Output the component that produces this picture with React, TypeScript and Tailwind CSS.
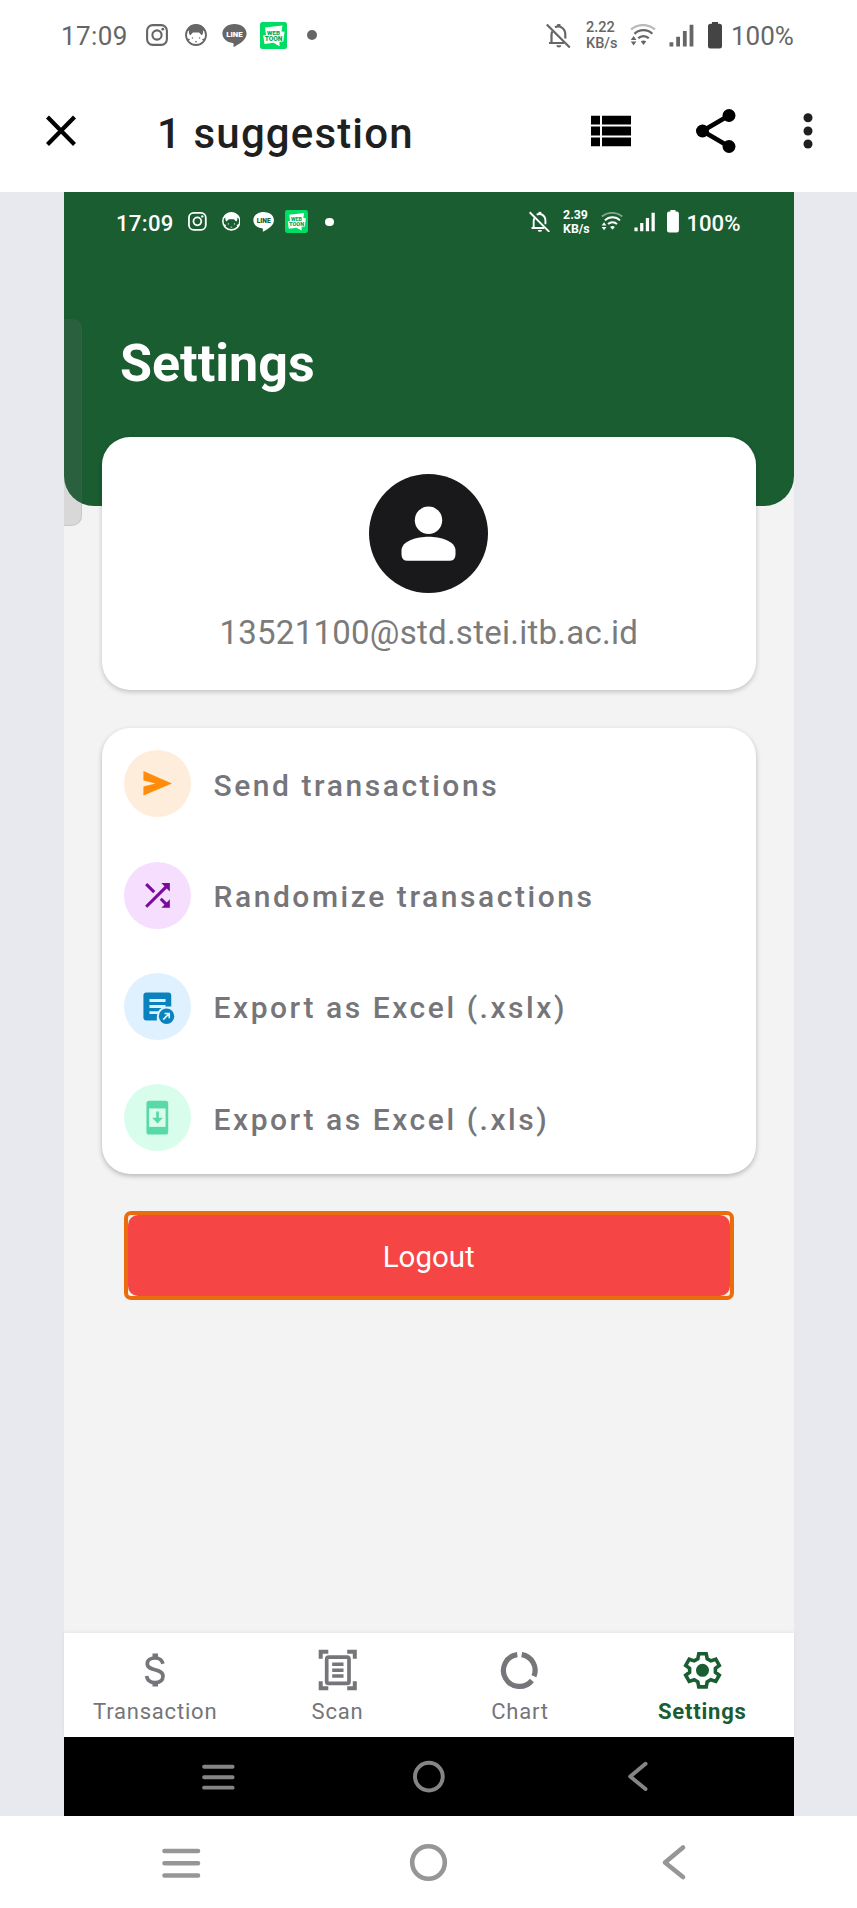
import React from 'react';

function Instagram() {
  return (
    <svg className="h-[22px] w-[22px]" viewBox="0 0 22 22" fill="none" stroke="currentColor" strokeWidth="2.1">
      <rect x="1.1" y="1.1" width="19.8" height="19.8" rx="5.6" />
      <circle cx="11" cy="11" r="4.6" />
      <circle cx="16.8" cy="5.2" r="1.4" fill="currentColor" stroke="none" />
    </svg>
  );
}

function Cat() {
  return (
    <svg className="h-[22px] w-[22px]" viewBox="0 0 22 22">
      <circle cx="11" cy="11" r="10" fill="none" stroke="currentColor" strokeWidth="1.8" />
      <path
        d="M1.500 7.500A10 10 0 0 1 20.500 7.500L18 6.600C18.300 9 17.800 10.500 16.800 11.200C15.500 10.600 14.800 9.200 14 8.600H8C7.200 9.200 6.500 10.600 5.200 11.200C4.200 10.500 3.700 9 4 6.600Z"
        fill="currentColor"
      />
      <g fill="currentColor">
        <circle cx="7.400" cy="14" r=".7" />
        <circle cx="14.600" cy="14" r=".7" />
        <path d="M2.500 14.500l2.600.8-1.600 1.600zM19.500 14.500l-2.600.8 1.600 1.600zM10 17.200h2v1h-2z" />
      </g>
    </svg>
  );
}

function Line({ knock }: { knock: string }) {
  return (
    <svg className="h-[23px] w-[25px]" viewBox="0 0 25 23">
      <path
        d="M12.500 0C5.600 0 .4 4.200.4 9.600c0 4.900 4.300 8.800 10.200 9.500 1.300.2 1.100 1.200.9 3.500 0 .5.300.6.900.2C17.500 19.800 24.600 16 24.600 9.600 24.600 4.200 19.400 0 12.500 0z"
        fill="currentColor"
      />
      <text x="12.500" y="12.600" textAnchor="middle" fontFamily="Roboto" fontWeight="900" fontSize="7.800" fill={knock}>
        LINE
      </text>
    </svg>
  );
}

function Webtoon() {
  return (
    <svg className="h-[27px] w-[27px]" viewBox="0 0 27 27">
      <rect width="27" height="27" rx="2.500" fill="#00dc64" />
      <path d="M5 5.500L22.500 3.500L21.500 9.500L24.500 9.800L23.300 19.500L19.500 19.800V24.200L13.500 20.800L4.500 22L3.200 13.500L6 13Z" fill="#fff" />
      <text x="13.500" y="12.900" textAnchor="middle" fontFamily="Roboto" fontWeight="900" fontSize="6.200" fill="#00a85a">
        WEB
      </text>
      <text x="13.600" y="18.600" textAnchor="middle" fontFamily="Roboto" fontWeight="900" fontSize="6.600" fill="#00a85a">
        TOON
      </text>
    </svg>
  );
}

function BellOff() {
  return (
    <svg className="h-[25px] w-[25px]" viewBox="0 0 25 25" fill="none" stroke="currentColor" strokeWidth="2.200">
      <path d="M.8 1.500L23.800 24.500" />
      <path d="M6.300 8.500C5.700 9.800 5.500 10.800 5.500 12V19.500M3 20H18" />
      <path d="M9 4.300C13.500 2 19.300 5 19.300 11.500V15.500" />
      <path d="M12.800 1V4" strokeWidth="3.200" />
      <path d="M10.300 22.300H15.300A2.500 2.200 0 0 1 10.300 22.300Z" fill="currentColor" stroke="none" />
    </svg>
  );
}

function Wifi() {
  return (
    <svg className="h-[22px] w-[26px]" viewBox="0 0 26 22" fill="none" stroke="currentColor" strokeWidth="2.300">
      <path d="M1 5.300C8 -.4 18 -.4 25 5.300" opacity=".45" />
      <path d="M4.500 9.800C9.500 5 17.500 5 22.300 9.800" />
      <path d="M8.300 14.300C11 11.300 16 11.300 18.800 14.300" />
      <g fill="currentColor" stroke="none">
        <path d="M10.800 17.500C12.300 16 14.700 16 16.200 17.500L13.500 21z" />
        <path d="M.8 16L3.600 12L6.400 16zM.8 17.500H6.400L3.600 21.500z" />
      </g>
    </svg>
  );
}

function Signal() {
  return (
    <svg className="h-[23px] w-[25px]" viewBox="0 0 25 23" fill="currentColor">
      <path d="M.5 18.300H4.300V22.500H.5zM7.200 12.800H11V22.500H7.200zM13.900 7H17.700V22.500H13.900zM20.600 .8H24.400V22.500H20.600z" />
    </svg>
  );
}

function Battery() {
  return (
    <svg className="h-[27px] w-[14px]" viewBox="0 0 14 27" fill="currentColor">
      <path d="M4 0H10V1.800H11.500Q14 1.800 14 4.300V24Q14 26.500 11.500 26.500H2.500Q0 26.500 0 24V4.300Q0 1.800 2.500 1.800H4Z" />
    </svg>
  );
}

function StatusBar({ speed, knock, strong }: { speed: string; knock: string; strong?: boolean }) {
  return (
    <div className={'flex h-[70px] w-[857px] items-center pl-[61px] pr-[62px] ' + (strong ? 'font-medium' : 'font-normal')}>
      <span className="w-[85px] pt-[2px] text-[26px] leading-none tracking-[0.400px]">17:09</span>
      <div className="flex items-center">
        <Instagram />
        <span className="ml-[17px]"><Cat /></span>
        <span className="ml-[15px]"><Line knock={knock} /></span>
        <span className="ml-[13px]"><Webtoon /></span>
        <span className="ml-5 h-[10px] w-[10px] rounded-full bg-current" />
      </div>
      <div className="ml-auto flex items-center">
        <BellOff />
        <span className={'ml-[15px] w-[44px] pt-[2px] text-[14.500px] leading-[16px] ' + (strong ? 'font-bold' : 'font-medium')}>
          {speed}
          <br />
          KB/s
        </span>
        <Wifi />
        <span className="ml-[13px]"><Signal /></span>
        <span className={strong ? 'ml-[14px]' : 'ml-[14px] text-[#444]'}><Battery /></span>
        <span className="ml-[9px] w-[64px] pt-[2px] text-[26px] leading-none">100%</span>
      </div>
    </div>
  );
}

function SystemNav() {
  return (
    <svg className="block h-[92px] w-[857px]" viewBox="0 0 857 92" fill="none" stroke="currentColor" strokeWidth="4.600" strokeLinecap="round" strokeLinejoin="round">
      <path d="M164.500 35H198M164.500 47.200H198M164.500 59.500H198" />
      <circle cx="428.500" cy="46.500" r="16.300" />
      <path d="M683 31.500L665 46.500L683 61" />
    </svg>
  );
}

function OptionRow({ label, badge, children }: { label: string; badge: string; children: React.ReactNode }) {
  return (
    <div className="flex h-[111.400px] items-center pl-[22px]">
      <div className={'flex h-[67px] w-[67px] items-center justify-center rounded-full ' + badge}>
        <svg className="h-[67px] w-[67px]" viewBox="0 0 200 200">
          {children}
        </svg>
      </div>
      <span className="ml-[23px] pt-[4px] text-[30px] font-medium leading-none tracking-[2.550px] text-[#75757a]">{label}</span>
    </div>
  );
}

function Tab({ label, active, children }: { label: string; active?: boolean; children: React.ReactNode }) {
  return (
    <div className={'flex flex-1 flex-col items-center pt-[15px] ' + (active ? 'font-bold text-[#195d31]' : 'text-[#75757a]')}>
      <svg className="h-[45px] w-[45px]" viewBox="0 0 45 45">
        {children}
      </svg>
      <span className="mt-[7px] text-[22px] leading-[24px] tracking-[0.800px]">{label}</span>
    </div>
  );
}

export default function App() {
  return (
    <div className="flex h-[1908px] w-[857px] flex-col overflow-hidden bg-white font-['Roboto',sans-serif]">
      <div className="text-[#666]">
        <StatusBar speed="2.22" knock="#fff" />
      </div>
      <header className="flex h-[122px] items-start pl-[45px] pt-9 text-black">
        <svg className="mt-[9px] h-8 w-8" viewBox="0 0 32 32" stroke="currentColor" strokeWidth="4.200">
          <path d="M2.500 2L29.500 29.500M29.500 2L2.500 29.500" />
        </svg>
        <h1 className="ml-[80px] mt-[4px] w-[434px] text-[42px] font-medium leading-[48px] tracking-[1.150px] text-[#1f1f1f]">1 suggestion</h1>
        <svg className="mt-[9px] h-8 w-10" viewBox="0 0 40 32" fill="currentColor">
          <path d="M0 .7H9V9.500H0zM11 .7H40V9.500H11zM0 11.600H9V20.400H0zM11 11.600H40V20.400H11zM0 22.500H9V31.200H0zM11 22.500H40V31.200H11z" />
        </svg>
        <svg className="ml-[65px] mt-[3px] h-11 w-10" viewBox="0 0 40 44" fill="currentColor">
          <path d="M33 6.500L6.500 22L33 37.500" fill="none" stroke="currentColor" strokeWidth="4.600" />
          <circle cx="6.500" cy="22" r="6.500" />
          <circle cx="33" cy="6.500" r="6.500" />
          <circle cx="33" cy="37.500" r="6.500" />
        </svg>
        <svg className="ml-[67px] mt-[7px] h-9 w-[10px]" viewBox="0 0 10 36" fill="#1f1f1f">
          <circle cx="5" cy="4.800" r="4.500" />
          <circle cx="5" cy="18" r="4.500" />
          <circle cx="5" cy="31" r="4.500" />
        </svg>
      </header>

      <main className="flex h-[1624px] bg-[#e8e9ef] pl-16">
        <div className="relative flex w-[729.500px] flex-col bg-[#f3f3f3]">
          <div className="h-[314px] rounded-b-[30px] bg-[#195d31] text-white">
            <div className="[zoom:0.8515]">
              <StatusBar speed="2.39" knock="#195d31" strong />
            </div>
            <h2 className="pl-[56px] pt-[82px] text-[52px] font-bold leading-[60px]">Settings</h2>
          </div>
          <div className="absolute left-0 top-[127px] h-[207px] w-[18px] rounded-r-[10px] border-b border-r border-[#6e6e6e]/15 bg-[#6e6e6e]/20" />

          <section className="relative z-10 mx-[37.500px] -mt-[69px] flex h-[253px] shrink-0 flex-col items-center rounded-[28px] bg-white pt-[37px] shadow-[0_2px_5px_rgba(0,0,0,0.200)]">
            <svg className="h-[119px] w-[119px]" viewBox="0 0 119 119">
              <circle cx="59.500" cy="59.500" r="59.500" fill="#19191b" />
              <circle cx="59.500" cy="46.300" r="13.700" fill="#fff" />
              <path d="M32.500 76.500C32.500 67 48 62.800 59.500 62.800S86.500 67 86.500 76.500V80.500Q86.500 86.800 80.200 86.800H38.800Q32.500 86.800 32.500 80.500Z" fill="#fff" />
            </svg>
            <p className="mt-[20px] text-[33px] leading-[40px] tracking-[0.250px] text-[#7b7b7b]">13521100@std.stei.itb.ac.id</p>
          </section>

          <section className="mx-[37.500px] mt-[38px] h-[446px] shrink-0 rounded-[28px] bg-white shadow-[0_2px_5px_rgba(0,0,0,0.250)]">
            <OptionRow label="Send transactions" badge="bg-[#ffeddc]">
              <path d="M58 63L143 100L58 136V109L94 100L58 91Z" fill="#ff8c0a" />
            </OptionRow>
            <OptionRow label="Randomize transactions" badge="bg-[#f5defe]">
              <g transform="translate(44.500 44.500) scale(4.620)">
                <path
                  d="M10.590 9.170L5.410 4 4 5.410l5.170 5.170 1.420-1.410zM14.500 4l2.040 2.040L4 18.590 5.410 20 17.960 7.460 20 9.500V4h-5.500zm.33 9.410l-1.410 1.410 3.130 3.130L14.500 20H20v-5.500l-2.040 2.040-3.130-3.130z"
                  fill="#7a0a9c"
                />
              </g>
            </OptionRow>
            <OptionRow label="Export as Excel (.xslx)" badge="bg-[#dff1fe]">
              <rect x="58" y="58" width="83" height="84" rx="9" fill="#0a82bd" />
              <path d="M76 82H124M76 100H124M76 118.500H108" stroke="#dff1fe" strokeWidth="8.500" />
              <path d="M98 143V128A29 29 0 0 1 127 100H146V146Z" fill="#dff1fe" />
              <circle cx="127" cy="129" r="23" fill="#0a82bd" />
              <path d="M117 139L133 123M121 121H135V135" fill="none" stroke="#dff1fe" strokeWidth="5" />
            </OptionRow>
            <OptionRow label="Export as Excel (.xls)" badge="bg-[#d9fdec]">
              <rect x="67" y="50" width="65" height="101" rx="8" fill="#59d9a5" />
              <rect x="75" y="73" width="49" height="55" fill="#d9fdec" />
              <path d="M100 82V114" stroke="#59d9a5" strokeWidth="8" />
              <path d="M84 101H116L100 118Z" fill="#59d9a5" />
            </OptionRow>
          </section>

          <div className="mx-[60px] mt-[37px] h-[89px] shrink-0 rounded-[7px] border-[4.500px] border-[#ea6c0c] bg-[#f4efe6]">
            <button className="h-full w-full rounded-[10px] bg-[#f54545] pt-[3px] text-[29.500px] font-normal text-white">Logout</button>
          </div>

          <nav className="mt-auto flex h-[104px] shrink-0 bg-white shadow-[0_-1px_4px_rgba(0,0,0,0.060)]">
            <Tab label="Transaction">
              <path
                d="M30 15.800C29 11.800 26 10 22 10C17.500 10 14.300 12 14.300 15.800C14.300 24 30 19.500 30 28.300C30 32.300 26.800 34.600 22 34.600C17.500 34.600 14.300 32.500 13.600 28"
                fill="none"
                stroke="currentColor"
                strokeWidth="3.700"
              />
              <path d="M19.500 5.500H25V10.500H19.500zM19.500 34H25V38.500H19.500z" fill="currentColor" />
            </Tab>
            <Tab label="Scan">
              <g fill="none" stroke="currentColor" strokeWidth="4">
                <path d="M5.700 10.800V3.700H13.300M32.200 3.700H39.800V10.800M39.800 33.200V40.200H32.200M13.300 40.200H5.700V33.200" />
                <rect x="11.700" y="9.200" width="22.300" height="26.200" rx="2" strokeWidth="3.700" />
                <path d="M17.200 16.200H28.500M17.200 22.200H28.500M17.200 28H28.500" strokeWidth="3.400" />
              </g>
            </Tab>
            <Tab label="Chart">
              <g fill="none" stroke="currentColor" strokeWidth="5.200">
                <path d="M24.700 6.600A16 16 0 0 1 37 28.300" />
                <path d="M34.900 32.500A16 16 0 1 1 20.300 6.600" />
              </g>
            </Tab>
            <Tab label="Settings" active>
              <path
                d="M18.800 5.700H26.200L27.200 10.800L30.800 12.900L35.800 11.200L39.300 17.400L35.400 20.300V24.300L39.300 27.200L35.800 33.400L30.800 31.700L27.200 33.800L26.200 38.900H18.800L17.800 33.800L14.200 31.700L9.200 33.400L5.700 27.200L9.600 24.300V20.300L5.700 17.400L9.200 11.200L14.200 12.900L17.800 10.800Z"
                fill="none"
                stroke="currentColor"
                strokeWidth="3.600"
              />
              <circle cx="22.500" cy="22.300" r="6.500" fill="currentColor" />
            </Tab>
          </nav>
          <div className="h-[79px] shrink-0 overflow-hidden bg-black text-[#858585]">
            <div className="[zoom:0.8515]">
              <SystemNav />
            </div>
          </div>
        </div>
      </main>
      <footer className="h-[92px] bg-white text-[#969696]">
        <SystemNav />
      </footer>
    </div>
  );
}
